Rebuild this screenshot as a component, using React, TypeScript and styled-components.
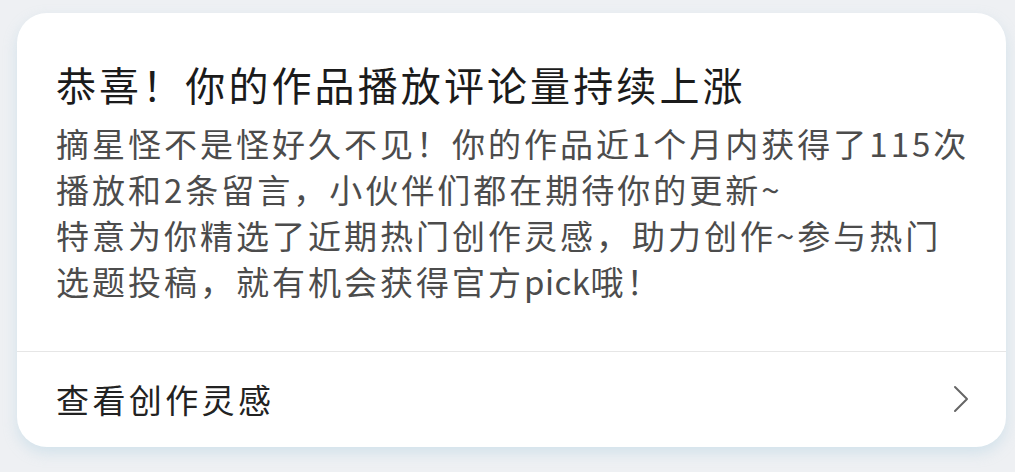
import React from "react"
import styled, { createGlobalStyle } from "styled-components"

const GlobalStyle = createGlobalStyle`
  html, body {
    margin: 0;
    padding: 0;
    background: #eef0f3;
  }
  body {
    font-family: "Noto Sans CJK SC", "Noto Sans", sans-serif;
  }
`

const Page = styled.div`
  width: 1015px;
  height: 472px;
  box-sizing: border-box;
  padding: 13px 9px 0 17px;
  background: #eef0f3;
`

const Card = styled.div`
  width: 989px;
  height: 434px;
  display: flex;
  flex-direction: column;
  background: #ffffff;
  border-radius: 30px;
  box-shadow: 0 6px 14px rgba(160, 200, 220, 0.35);
  overflow: hidden;
`

const Body = styled.div`
  display: flex;
  flex-direction: column;
  gap: 12px;
  padding: 47px 39px 47px 39px;
  border-bottom: 1px solid #e6e6e6;
`

const Title = styled.div`
  font-size: 40px;
  line-height: 48px;
  letter-spacing: 3.1px;
  color: #1b1b1b;
  white-space: nowrap;
`

const Message = styled.div`
  display: flex;
  flex-direction: column;
`

const Line = styled.div`
  font-size: 33px;
  line-height: 46px;
  letter-spacing: 3px;
  color: #4c4c4c;
  white-space: nowrap;
`

const Latin = styled.span`
  letter-spacing: 0.5px;
`

const Footer = styled.div`
  flex: 1;
  display: flex;
  align-items: center;
  justify-content: space-between;
  padding: 0 36px 2px 39px;
`

const Action = styled.div`
  font-size: 33px;
  line-height: 46px;
  letter-spacing: 3.4px;
  color: #222222;
`

const Chevron = () => (
  <svg width="18" height="28" viewBox="0 0 18 28" fill="none">
    <path d="M3 2 L15 14 L3 26" stroke="#666666" strokeWidth="2" strokeLinecap="round" strokeLinejoin="round" />
  </svg>
)

export default function App() {
  return (
    <>
      <GlobalStyle />
      <Page>
        <Card>
          <Body>
            <Title>恭喜！你的作品播放评论量持续上涨</Title>
            <Message>
              <Line>摘星怪不是怪好久不见！你的作品近1个月内获得了115次</Line>
              <Line>播放和2条留言，小伙伴们都在期待你的更新~</Line>
              <Line>特意为你精选了近期热门创作灵感，助力创作~参与热门</Line>
              <Line>
                选题投稿，就有机会获得官方<Latin>pick</Latin>哦！
              </Line>
            </Message>
          </Body>
          <Footer>
            <Action>查看创作灵感</Action>
            <Chevron />
          </Footer>
        </Card>
      </Page>
    </>
  )
}
